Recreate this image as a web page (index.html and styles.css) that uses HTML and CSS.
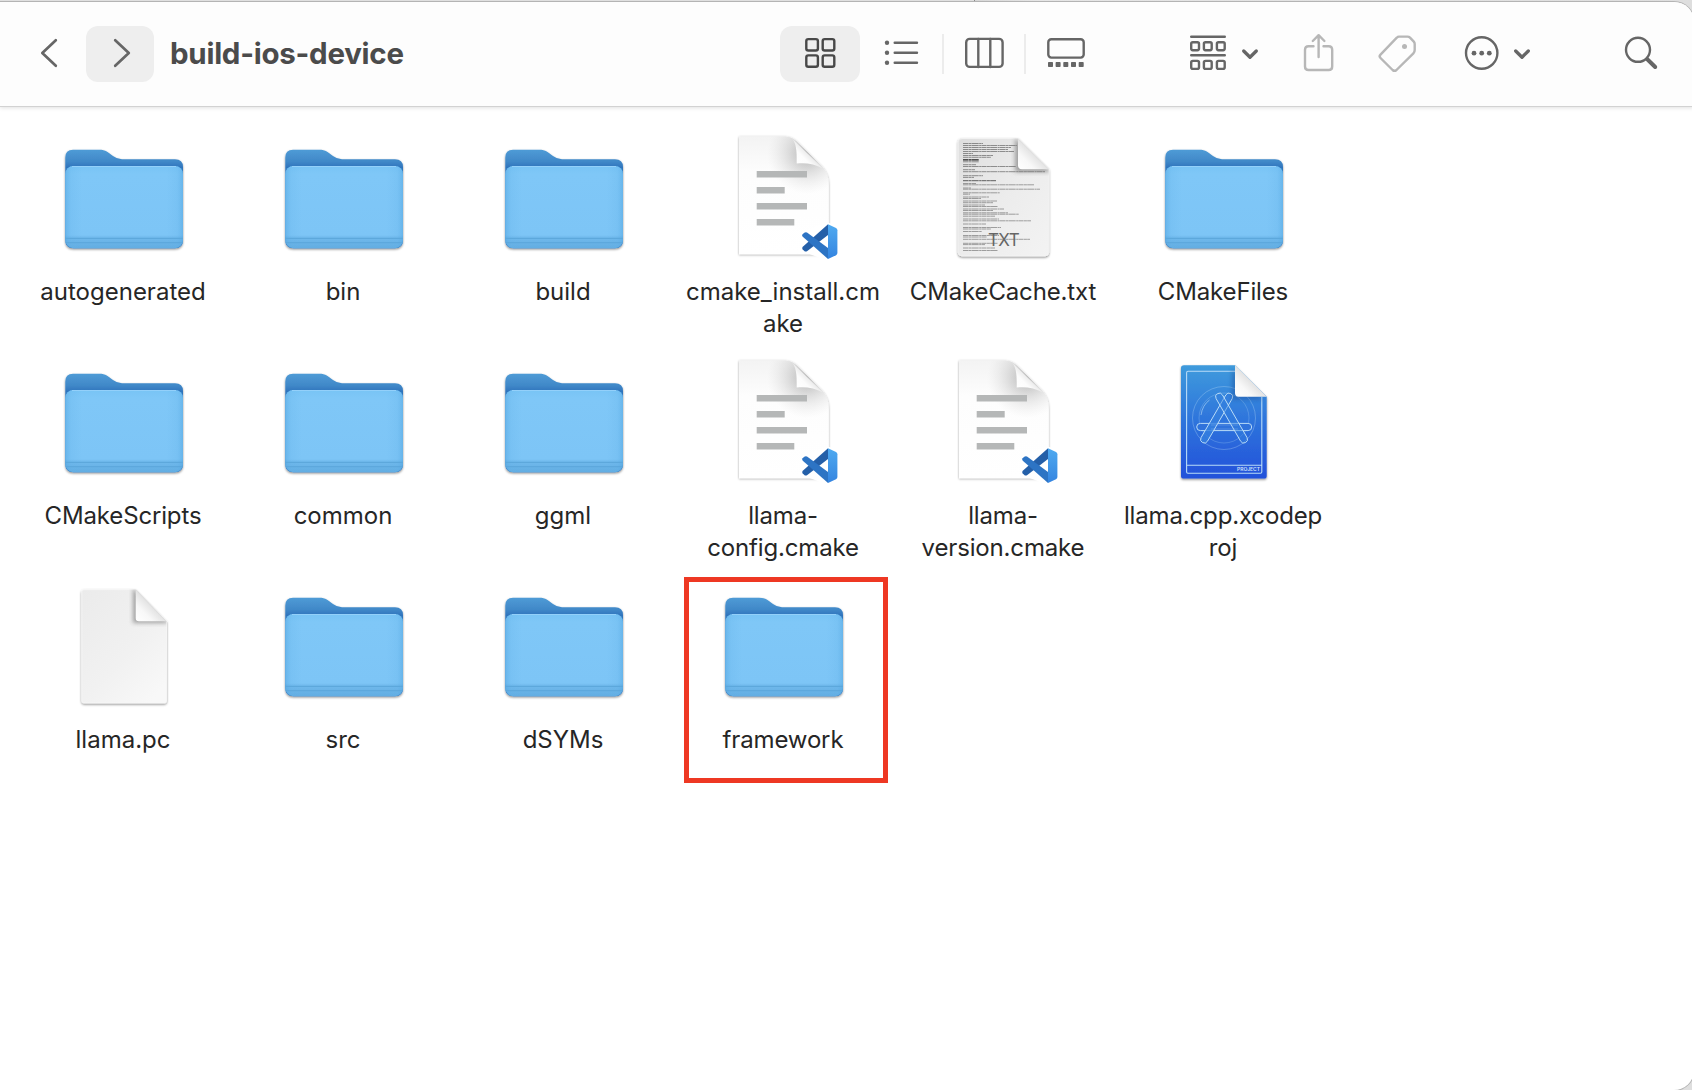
FILE: index.html
```html
<!DOCTYPE html>
<html lang="en">
<head>
<meta charset="utf-8">
<title>build-ios-device</title>
<link rel="stylesheet" href="styles.css">
</head>
<body>
<svg class="defs" width="0" height="0" aria-hidden="true">
  <defs>
    <linearGradient id="folderBack" x1="0" y1="0" x2="0" y2="1"><stop offset="0" stop-color="#4f9bd6"/><stop offset=".12" stop-color="#4088c8"/><stop offset=".18" stop-color="#2f74bd"/><stop offset="1" stop-color="#2f74bd"/></linearGradient>
    <linearGradient id="folderFront" x1="0" y1="0" x2="0" y2="1"><stop offset="0" stop-color="#78c4f5"/><stop offset=".1" stop-color="#7fc7f7"/><stop offset=".84" stop-color="#7dc5f6"/><stop offset=".87" stop-color="#70b9ec"/><stop offset="1" stop-color="#62ade2"/></linearGradient>
    <linearGradient id="folderSides"><stop offset="0" stop-color="#4ba0dc" stop-opacity=".45"/><stop offset=".05" stop-color="#62b1e8" stop-opacity=".2"/><stop offset=".14" stop-color="#62b1e8" stop-opacity="0"/><stop offset=".86" stop-color="#62b1e8" stop-opacity="0"/><stop offset=".95" stop-color="#62b1e8" stop-opacity=".2"/><stop offset="1" stop-color="#4ba0dc" stop-opacity=".45"/></linearGradient>
    <linearGradient id="paper" x1="0" y1="0" x2="0" y2="1"><stop offset="0" stop-color="#f3f3f3"/><stop offset=".3" stop-color="#fdfdfd"/><stop offset="1" stop-color="#fff"/></linearGradient>
    <linearGradient id="curl" gradientUnits="userSpaceOnUse" x1="79" y1="35" x2="92" y2="22"><stop offset="0" stop-color="#fff"/><stop offset=".5" stop-color="#fcfcfc"/><stop offset="1" stop-color="#e2e2e2"/></linearGradient>
    <radialGradient id="curlShade" gradientUnits="userSpaceOnUse" cx="88" cy="24" r="40"><stop offset="0" stop-color="#888" stop-opacity=".6"/><stop offset=".35" stop-color="#999" stop-opacity=".38"/><stop offset="1" stop-color="#ccc" stop-opacity="0"/></radialGradient>
    <linearGradient id="sheet" x1="0" y1="0" x2=".8" y2="1"><stop offset="0" stop-color="#ebebeb"/><stop offset=".6" stop-color="#f1f1f1"/><stop offset="1" stop-color="#f8f8f8"/></linearGradient>
    <linearGradient id="txtSheet" x1="0" y1="0" x2="1" y2="1"><stop offset="0" stop-color="#dedede"/><stop offset=".5" stop-color="#ececec"/><stop offset="1" stop-color="#f3f3f3"/></linearGradient>
    <linearGradient id="flap" x1="0" y1="1" x2=".55" y2=".45"><stop offset="0" stop-color="#fff"/><stop offset=".5" stop-color="#f8f8f8"/><stop offset="1" stop-color="#dedede"/></linearGradient>
    <linearGradient id="blueprint" x1="0" y1="0" x2="0" y2="1"><stop offset="0" stop-color="#3f9bdc"/><stop offset=".45" stop-color="#2f77dc"/><stop offset="1" stop-color="#2351da"/></linearGradient>
    <linearGradient id="codeRight" x1="0" y1="0" x2="0" y2="1"><stop offset="0" stop-color="#4faaf0"/><stop offset="1" stop-color="#3484e0"/></linearGradient>
    <filter id="drop" x="-20%" y="-20%" width="140%" height="140%"><feDropShadow dx="0" dy="1.2" stdDeviation="1.1" flood-color="#000" flood-opacity=".45"/></filter>
    <filter id="dropSoft" x="-20%" y="-20%" width="140%" height="140%"><feDropShadow dx="0" dy=".7" stdDeviation=".8" flood-color="#000" flood-opacity=".38"/></filter>
    <filter id="flapDrop" x="-60%" y="-60%" width="220%" height="220%"><feGaussianBlur stdDeviation="2.3"/></filter>
    <clipPath id="vsPaper"><path d="M20 6.500H64C71 6.500 75 8.500 79 12.500L101 34.500C107 40 109.800 46 109.800 55V124.200H20Z"/></clipPath>
    <clipPath id="txtClip"><path d="M23 8H79L109.800 39V122Q109.800 126 106 126H23Q19.200 126 19.200 122V12Q19.200 8 23 8Z"/></clipPath>
    <clipPath id="pageClip"><path d="M25 11.300H76.700L107.500 43.300V123Q107.500 125.300 105.500 125.300H25Q22.800 125.300 22.800 123V14Q22.800 11.300 25 11.300Z"/></clipPath>

    <symbol id="folder" viewBox="0 0 128 128">
      <g filter="url(#drop)">
        <path fill="url(#folderBack)" d="M14 19.800H40C47 19.800 49 22.500 54 26Q58 29.200 63 29.200H116Q124 29.200 124 37V110Q124 118.200 116 118.200H14.300Q6.300 118.200 6.300 110V27.500Q6.300 19.800 14 19.800Z"/>
      </g>
      <rect x="6.300" y="36" width="117.700" height="82.200" rx="8" fill="url(#folderFront)"/>
      <rect x="6.300" y="36" width="117.700" height="82.200" rx="8" fill="url(#folderSides)"/>
      <path d="M13 36.500H117" stroke="#93d0fa" stroke-width="1"/>
      <path d="M6.500 108.400H123.800M6.500 112.700H123.500" stroke="#5ba6da" stroke-width="1"/>
    </symbol>

    <symbol id="vsdoc" viewBox="0 0 128 128" overflow="visible">
      <path filter="url(#dropSoft)" fill="url(#paper)" d="M20 6.500H64C71 6.500 75 8.500 79 12.500L101 34.500C107 40 109.800 46 109.800 55V124.200H20Z"/>
      <g clip-path="url(#vsPaper)"><rect x="40" y="0" width="75" height="80" fill="url(#curlShade)"/></g>
      <path fill="url(#curl)" d="M73 8.500C77 13 78 20 77.700 33.500C87 32.500 96 34 104 38.500Z"/>
      <path fill="#b5b7b7" d="M37.700 40.900H88v6.500H37.700ZM37.700 56.900H65.700v6.500H37.700ZM37.700 72.900H88v6.500H37.700ZM37.700 88.900H75.300v6.500H37.700Z"/>
      <path fill="#fff" stroke="#fff" stroke-width="4" stroke-linejoin="round" d="M109 94.500L118 98V124L109 129L83 119V104Z"/>
      <path fill="#245fa8" d="M109 94.300V105L88 121.200Q86.500 122 85.300 121L83.600 119.300Q82.500 118 83.800 116.800Z"/>
      <path fill="#2d74c4" d="M109 129V118L88 102.500Q86.500 101.700 85.300 102.700L83.600 104.200Q82.500 105.500 83.800 106.700Z"/>
      <path fill="url(#codeRight)" d="M109 94.300L117 98Q118.400 98.800 118.400 100.300V123Q118.400 124.600 117 125.300L109 129Z"/>
    </symbol>

    <symbol id="txt" viewBox="0 0 128 128" overflow="visible">
      <path filter="url(#drop)" fill="url(#txtSheet)" stroke="#f4f4f4" stroke-width=".8" d="M23 8.500H79L109.800 39V122Q109.800 126 106 126H23Q19.200 126 19.200 122V12Q19.200 8.500 23 8.500Z"/>
      <g stroke="#666" stroke-width=".7" stroke-dasharray="5 .4 3 .3 7 .5 2 .3" fill="none">
        <path d="M24 13.500H44M24 15.500H78M24 17.500H72M24 19.500H69M24 21.500H75M24 23.500H34M24 25.500H54M24 27.300H52"/>
        <path stroke="#222" stroke-width="1.200" d="M24 29.800H40"/>
        <path d="M24 31.800H40M24 34.700H37M24 36.500H77M24 39.700H36M24 41.700H106M24 45.700H44M24 47.400H35"/>
        <path stroke="#222" d="M24 50.700H57"/>
        <path opacity=".85" d="M24 53.500H37M24 54.800H95M24 58H32M24 59.200H101M24 62.800H61M24 64.200H31M24 67H50M24 68.500H42M24 71H58M24 72.700H54M24 75H46M24 76.500H59M24 79H65M24 80.500H54M24 82.800H69M24 84.200H80M24 86.200H56M24 89H60M24 90.800H92M24 94H47M24 97.500H62M24 99H52M24 101.500H43M24 105.500H60M24 107H48M24 109.300H91M24 113.300H59M24 114.600H46M24 118H56M24 120.500H59"/>
      </g>
      <g clip-path="url(#txtClip)"><path d="M76 8V42H112Z" fill="#777" opacity=".65" filter="url(#flapDrop)"/></g>
      <path fill="url(#flap)" d="M79 8.800L109.800 39.200H83Q79 39.200 79 35.500Z"/>
      <text class="txt-badge" x="64.500" y="116" text-anchor="middle">TXT</text>
    </symbol>

    <symbol id="page" viewBox="0 0 128 128" overflow="visible">
      <path filter="url(#drop)" fill="url(#sheet)" stroke="#f7f7f7" stroke-width=".8" d="M25 11.700H76.700L107.500 43.300V123Q107.500 125 105.500 125H25Q22.800 125 22.800 123V14Q22.800 11.700 25 11.700Z"/>
      <g clip-path="url(#pageClip)"><path d="M74 10V45H110Z" fill="#777" opacity=".65" filter="url(#flapDrop)"/></g>
      <path fill="url(#flap)" d="M76.700 11.900L107.500 43.300H80Q76.700 43.300 76.700 40Z"/>
    </symbol>

    <symbol id="xcode" viewBox="0 0 128 128" overflow="visible">
      <path filter="url(#drop)" fill="url(#blueprint)" d="M25 11.200H76L107.700 42.700V122Q107.700 124.600 105 124.600H25Q22 124.600 22 122V14Q22 11.200 25 11.200Z"/>
      <g fill="none" stroke="#b9dcf7">
        <path d="M76 17.300H29Q27.600 17.300 27.600 18.700V118Q27.600 119.200 29 119.200H101.500Q102.800 119.200 102.800 118V43M27.600 111.300H102.800" stroke-width="1.100"/>
        <circle cx="65" cy="64" r="31.500" stroke-width=".8" opacity=".4"/>
        <circle cx="65" cy="64" r="25" stroke-width=".8" opacity=".3"/>
        <path d="M42 61Q43.500 51 50.500 46" stroke-width="1" opacity=".6"/>
        <g stroke-width="1">
          <rect x="37.700" y="69.400" width="55" height="7.200" rx="3.600" fill="#2f72db"/>
          <path fill="#3480de" fill-opacity=".8" d="M66.800 41A3.600 3.600 0 0 1 73.200 44.600L48.500 87.200A3.600 3.600 0 0 1 42.100 83.500Z"/>
          <path fill="#3480de" fill-opacity=".45" d="M63.500 41A3.600 3.600 0 0 0 57.100 44.600L81.600 87.200A3.600 3.600 0 0 0 88 83.500Z"/>
          <path d="M52 71H79M52 75H79" opacity=".25"/>
        </g>
      </g>
      <path d="M73 15V45.500H104Z" fill="#123a80" opacity=".35" filter="url(#flapDrop)" clip-path="url(#pageClip)"/>
      <path fill="url(#flap)" d="M76 11.200L107.700 42.700H79.500Q76 42.700 76 39Z"/>
      <text class="project-badge" x="78" y="117" textLength="23" lengthAdjust="spacingAndGlyphs">PROJECT</text>
    </symbol>
  </defs>
</svg>

<main class="window">
  <header class="toolbar">
    <button class="tool back" aria-label="Back"><svg viewBox="20 26 66 56" width="66" height="56"><path d="M55.800 40.200L42.300 53L55.800 65.800"/></svg></button>
    <button class="tool tool-active forward" aria-label="Forward"><svg viewBox="86 26 68 56" width="68" height="56"><path d="M115.200 40.200L128.800 53L115.200 65.800"/></svg></button>
    <h1 class="title">build-ios-device</h1>

    <div class="views">
      <button class="tool tool-active selected" aria-label="Icons"><svg viewBox="780 26 80 56" width="80" height="56"><rect x="806.300" y="39.100" width="11.600" height="11.400" rx="2"/><rect x="822.700" y="39.100" width="11.600" height="11.400" rx="2"/><rect x="806.300" y="55.400" width="11.600" height="11.400" rx="2"/><rect x="822.700" y="55.400" width="11.600" height="11.400" rx="2"/></svg></button>
      <button class="tool" aria-label="List"><svg viewBox="860 26 82 56" width="82" height="56"><path d="M894.700 42.700H917M894.700 52.700H917M894.700 62.700H917"/><g class="solid"><circle cx="887" cy="42.700" r="2.200"/><circle cx="887" cy="52.700" r="2.200"/><circle cx="887" cy="62.700" r="2.200"/></g></svg></button>
      <i class="divider"></i>
      <button class="tool" aria-label="Columns"><svg viewBox="944 26 80 56" width="80" height="56"><rect x="966.200" y="38.900" width="36.400" height="28" rx="3.500"/><path d="M978.300 39V67M990.300 39V67"/></svg></button>
      <i class="divider"></i>
      <button class="tool" aria-label="Gallery"><svg viewBox="1026 26 80 56" width="80" height="56"><rect x="1048.300" y="39.300" width="35.400" height="18.300" rx="3"/><g class="solid"><rect x="1048" y="62" width="5" height="5" rx=".8"/><rect x="1055.600" y="62" width="5" height="5" rx=".8"/><rect x="1063.300" y="62" width="5" height="5" rx=".8"/><rect x="1071" y="62" width="5" height="5" rx=".8"/><rect x="1078.700" y="62" width="5" height="5" rx=".8"/></g></svg></button>
    </div>

    <div class="actions">
      <button class="tool" aria-label="Group"><svg viewBox="1180 26 90 56" width="90" height="56"><path d="M1191.200 36.700H1224.800M1191.200 55.300H1224.800"/><rect x="1191.200" y="42.200" width="7.800" height="8" rx="1.600"/><rect x="1203.900" y="42.200" width="7.800" height="8" rx="1.600"/><rect x="1216.900" y="42.200" width="7.800" height="8" rx="1.600"/><rect x="1191.200" y="60.900" width="7.800" height="8" rx="1.600"/><rect x="1203.900" y="60.900" width="7.800" height="8" rx="1.600"/><rect x="1216.900" y="60.900" width="7.800" height="8" rx="1.600"/><path class="caret" d="M1243.700 51L1250 57.200L1256.300 51"/></svg></button>
      <button class="tool dim" aria-label="Share"><svg viewBox="1280 26 76 56" width="76" height="56"><path d="M1313.500 46.300H1308.500Q1305 46.300 1305 49.800V66.500Q1305 70 1308.500 70H1328.700Q1332.200 70 1332.200 66.500V49.800Q1332.200 46.300 1328.700 46.300H1323.500M1318.600 57V35.500M1312.800 41L1318.600 35.200L1324.400 41"/></svg></button>
      <button class="tool dim" aria-label="Tags"><svg viewBox="1360 26 76 56" width="76" height="56"><path d="M1399 36.600H1407.500Q1409 36.600 1410 37.600L1413.800 41.600Q1414.700 42.600 1414.700 44V50Q1414.700 52 1413.400 53.300L1396.500 70Q1394.500 71.700 1392.600 70L1380.500 58Q1378.800 56.300 1380.500 54.600L1396.800 37.700Q1397.800 36.600 1399 36.600Z"/><g class="solid"><circle cx="1404.500" cy="46.500" r="2.500"/></g></svg></button>
      <button class="tool" aria-label="More"><svg viewBox="1455 26 86 56" width="86" height="56"><circle cx="1481.700" cy="53" r="15.700"/><g class="solid"><circle cx="1474" cy="53.200" r="2.400"/><circle cx="1481.700" cy="53.200" r="2.400"/><circle cx="1489.300" cy="53.200" r="2.400"/></g><path class="caret" d="M1515.700 51L1522 57.200L1528.300 51"/></svg></button>
      <button class="tool" aria-label="Search"><svg viewBox="1610 26 60 56" width="60" height="56"><circle cx="1638" cy="49.800" r="12"/><path class="handle" d="M1647.300 59.300L1655.200 67"/></svg></button>
    </div>
  </header>

  <section class="files">
    <figure class="item"><svg class="icon"><use href="#folder"/></svg><figcaption>autogenerated</figcaption></figure>
    <figure class="item"><svg class="icon"><use href="#folder"/></svg><figcaption>bin</figcaption></figure>
    <figure class="item"><svg class="icon"><use href="#folder"/></svg><figcaption>build</figcaption></figure>
    <figure class="item"><svg class="icon"><use href="#vsdoc"/></svg><figcaption>cmake_install.cm<br>ake</figcaption></figure>
    <figure class="item"><svg class="icon"><use href="#txt"/></svg><figcaption class="tight">CMakeCache.txt</figcaption></figure>
    <figure class="item"><svg class="icon"><use href="#folder"/></svg><figcaption class="tight">CMakeFiles</figcaption></figure>
    <figure class="item"><svg class="icon"><use href="#folder"/></svg><figcaption class="tight">CMakeScripts</figcaption></figure>
    <figure class="item"><svg class="icon"><use href="#folder"/></svg><figcaption>common</figcaption></figure>
    <figure class="item"><svg class="icon"><use href="#folder"/></svg><figcaption>ggml</figcaption></figure>
    <figure class="item"><svg class="icon"><use href="#vsdoc"/></svg><figcaption class="tight">llama-<br>config.cmake</figcaption></figure>
    <figure class="item"><svg class="icon"><use href="#vsdoc"/></svg><figcaption class="tight">llama-<br>version.cmake</figcaption></figure>
    <figure class="item"><svg class="icon"><use href="#xcode"/></svg><figcaption class="tight">llama.cpp.xcodep<br>roj</figcaption></figure>
    <figure class="item"><svg class="icon"><use href="#page"/></svg><figcaption>llama.pc</figcaption></figure>
    <figure class="item"><svg class="icon"><use href="#folder"/></svg><figcaption>src</figcaption></figure>
    <figure class="item"><svg class="icon"><use href="#folder"/></svg><figcaption>dSYMs</figcaption></figure>
    <figure class="item marked"><svg class="icon"><use href="#folder"/></svg><figcaption class="tight">framework</figcaption></figure>
  </section>
</main>
</body>
</html>
```

FILE: styles.css
```css
*, *::after { box-sizing: border-box; }

body {
  margin: 0;
  height: 1090px;
  padding-top: 2px;
  overflow: hidden;
  background: linear-gradient(90deg, #e0e0e0 974px, #8c8c8c 974px, #8c8c8c 975px, #d8d8d8 975px, #e6e6e6 1040px, #dedede);
  font-family: Inter, "Liberation Sans", sans-serif;
  color: #262626;
}

.defs { position: absolute; }

.window {
  width: 1694px;
  height: 1088px;
  background: #fff;
  border-radius: 0 20px 20px 0;
  box-shadow: 0 0 0 1px #b4b4b4;
  overflow: hidden;
}

.toolbar {
  display: flex;
  align-items: center;
  height: 105px;
  padding: 0 0 1px 20px;
  background: #fdfdfd;
  border-bottom: 1px solid #d2d2d2;
  box-shadow: 0 1px 4px rgba(0, 0, 0, .12);
}

.tool {
  display: block;
  flex: none;
  padding: 0;
  border: 0;
  background: none;
  color: #666;
}

.tool svg {
  display: block;
  fill: none;
  stroke: currentColor;
  stroke-width: 2.4;
  stroke-linecap: round;
  stroke-linejoin: round;
}

.tool .solid { fill: currentColor; stroke: none; }
.tool .caret { stroke-width: 3.3; }
.tool .handle { stroke-width: 4; }
.tool.dim { color: #b7b7b7; }
.back svg, .forward svg { stroke-width: 2.7; }

.tool-active {
  background: #eee;
  border-radius: 12px;
}

.selected { color: #484848; }

.title {
  flex: none;
  width: 610px;
  margin: 0 0 2px 16px;
  font-size: 29.500px;
  font-weight: 700;
  line-height: 40px;
  letter-spacing: -.27px;
  color: #4b4b4b;
}

.views, .actions { display: flex; align-items: center; }

.divider {
  width: 2px;
  height: 40px;
  background: #ececec;
}

.actions { margin-left: 74px; gap: 4px; }
.actions .tool:nth-child(2) { margin-left: 6px; }
.actions .tool:nth-child(4) { margin-left: 15px; }
.actions .tool:nth-child(5) { margin-left: 65px; }

.files {
  display: grid;
  grid-template-columns: repeat(6, 220px);
  grid-auto-rows: 224px;
  padding: 23px 0 0 13px;
}

.item {
  position: relative;
  display: flex;
  flex-direction: column;
  align-items: center;
  gap: 18px;
  margin: 0;
}

.icon {
  display: block;
  width: 128px;
  height: 128px;
  overflow: visible;
}

figcaption {
  font-size: 24px;
  line-height: 32px;
  text-align: center;
  white-space: nowrap;
}

.tight { letter-spacing: -.15px; }

/* red frame around the highlighted folder */
.marked::after {
  content: "";
  position: absolute;
  left: 10.500px;
  top: -1.500px;
  width: 204px;
  height: 206px;
  border: 5px solid #ee3823;
}

.txt-badge { font: 17px Inter, sans-serif; fill: #666; letter-spacing: -.6px; }
.project-badge { font: 600 5.200px Inter, sans-serif; fill: #cfe3fa; }
```
